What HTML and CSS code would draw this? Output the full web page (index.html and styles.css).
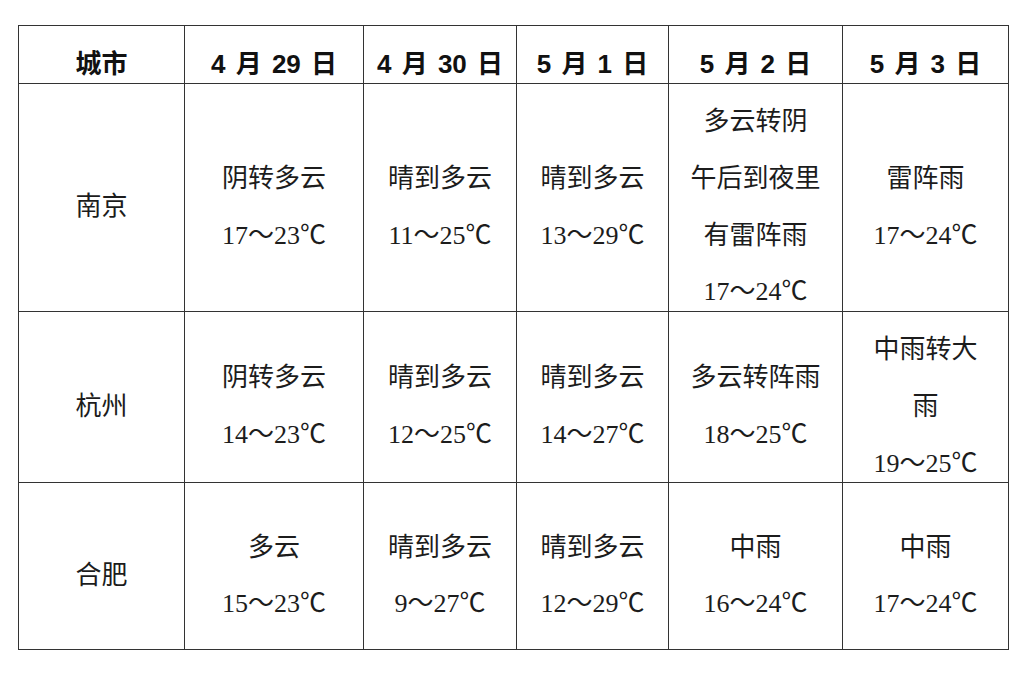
FILE: index.html
```html
<!DOCTYPE html>
<html lang="zh-CN">
<head>
<meta charset="utf-8">
<title>天气预报</title>
<link rel="stylesheet" href="styles.css">
</head>
<body>
<div class="page">
  <table class="weather">
    <colgroup>
      <col class="c1"><col class="c2"><col class="c3"><col class="c4"><col class="c5"><col class="c6">
    </colgroup>
    <thead>
      <tr class="head">
        <th><div class="in">城市</div></th>
        <th><div class="in">4 月 29 日</div></th>
        <th><div class="in">4 月 30 日</div></th>
        <th><div class="in">5 月 1 日</div></th>
        <th><div class="in">5 月 2 日</div></th>
        <th><div class="in">5 月 3 日</div></th>
      </tr>
    </thead>
    <tbody>
      <tr class="r1">
        <td><div class="in">南京</div></td>
        <td><div class="in">阴转多云<br>17～23℃</div></td>
        <td><div class="in">晴到多云<br>11～25℃</div></td>
        <td><div class="in">晴到多云<br>13～29℃</div></td>
        <td><div class="in">多云转阴<br>午后到夜里<br>有雷阵雨<br>17～24℃</div></td>
        <td><div class="in">雷阵雨<br>17～24℃</div></td>
      </tr>
      <tr class="r2">
        <td><div class="in">杭州</div></td>
        <td><div class="in">阴转多云<br>14～23℃</div></td>
        <td><div class="in">晴到多云<br>12～25℃</div></td>
        <td><div class="in">晴到多云<br>14～27℃</div></td>
        <td><div class="in">多云转阵雨<br>18～25℃</div></td>
        <td><div class="in">中雨转大<br>雨<br>19～25℃</div></td>
      </tr>
      <tr class="r3">
        <td><div class="in">合肥</div></td>
        <td><div class="in">多云<br>15～23℃</div></td>
        <td><div class="in">晴到多云<br>9～27℃</div></td>
        <td><div class="in">晴到多云<br>12～29℃</div></td>
        <td><div class="in">中雨<br>16～24℃</div></td>
        <td><div class="in">中雨<br>17～24℃</div></td>
      </tr>
    </tbody>
  </table>
</div>
</body>
</html>
```
FILE: styles.css
```css
html, body {
  margin: 0;
  padding: 0;
  background: #ffffff;
}

.page {
  padding: 25px 0 0 18px;
}

.weather {
  border-collapse: collapse;
  table-layout: fixed;
  width: 991px;
  color: #1c1c1c;
  font-family: "Liberation Serif", "Noto Sans CJK SC", serif;
  font-size: 26px;
}

.c1 { width: 166px; }
.c2 { width: 179px; }
.c3 { width: 153px; }
.c4 { width: 152px; }
.c5 { width: 174px; }
.c6 { width: 166px; }

.weather th,
.weather td {
  border: 1px solid #333333;
  padding: 0;
  text-align: center;
  vertical-align: middle;
}

.weather th {
  font-family: "Liberation Sans", "Noto Sans CJK SC", sans-serif;
  font-weight: bold;
  font-size: 26px;
  word-spacing: 3px;
  color: #111111;
}

.head { height: 58px; }
.r1 { height: 226px; }
.r2 { height: 170px; }
.r3 { height: 167px; }

.weather td .in {
  line-height: 56.75px;
  padding-top: 10px;
  margin-bottom: -10px;
  white-space: nowrap;
}

.weather th .in {
  line-height: 40px;
  padding-top: 9px;
  margin-bottom: -9px;
  white-space: pre;
}
```
